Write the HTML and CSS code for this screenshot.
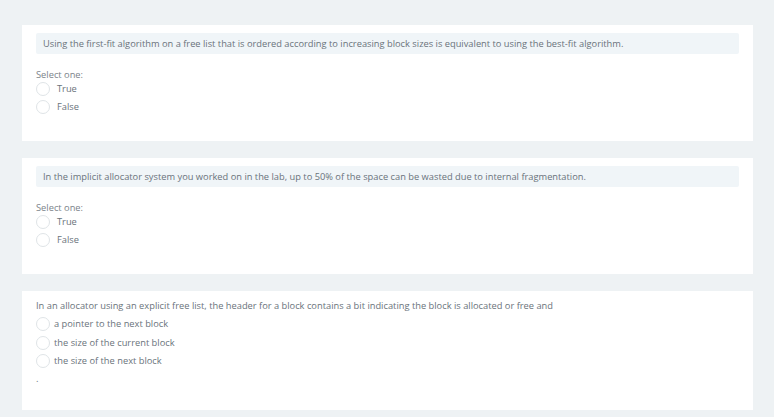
FILE: index.html
```html
<!DOCTYPE html>
<html>
<head>
<meta charset="utf-8">
<link rel="stylesheet" href="styles.css">
</head>
<body>
<div class="page">
  <section class="card">
    <div class="qtext">Using the first-fit algorithm on a free list that is ordered according to increasing block sizes is equivalent to using the best-fit algorithm.</div>
    <div class="prompt">Select one:</div>
    <div class="answers">
      <label class="opt"><span class="radio"></span><span class="lbl">True</span></label>
      <label class="opt"><span class="radio"></span><span class="lbl">False</span></label>
    </div>
  </section>
  <section class="card">
    <div class="qtext">In the implicit allocator system you worked on in the lab, up to 50% of the space can be wasted due to internal fragmentation.</div>
    <div class="prompt">Select one:</div>
    <div class="answers">
      <label class="opt"><span class="radio"></span><span class="lbl">True</span></label>
      <label class="opt"><span class="radio"></span><span class="lbl">False</span></label>
    </div>
  </section>
  <section class="card card-plain">
    <div class="qplain">In an allocator using an explicit free list, the header for a block contains a bit indicating the block is allocated or free and</div>
    <div class="answers">
      <label class="opt opt-tight"><span class="radio"></span><span class="lbl">a pointer to the next block</span></label>
      <label class="opt opt-tight"><span class="radio"></span><span class="lbl">the size of the current block</span></label>
      <label class="opt opt-tight"><span class="radio"></span><span class="lbl">the size of the next block</span></label>
    </div>
    <div class="dot">.</div>
  </section>
</div>
</body>
</html>
```

FILE: styles.css
```css
html, body {
  margin: 0;
  padding: 0;
  background: #eef2f4;
}
body {
  font-family: "Open Sans", "Liberation Sans", sans-serif;
  font-size: 9.3px;
  color: #6a737b;
}
.page {
  display: flex;
  flex-direction: column;
  gap: 17px;
  padding: 25px 21px 0 22px;
}
.card {
  background: #ffffff;
  padding: 8px 14px 25px 14px;
}
.qtext {
  background: #f0f5f8;
  border-radius: 2px;
  height: 21px;
  line-height: 21px;
  padding: 0 7px;
  color: #6a737b;
  white-space: nowrap;
}
.prompt {
  margin-top: 15px;
  height: 11px;
  line-height: 11px;
  color: #7b838a;
}
.answers {
  display: flex;
  flex-direction: column;
}
.opt {
  display: flex;
  align-items: center;
  height: 18px;
}
.radio {
  width: 12px;
  height: 12px;
  border: 1px solid #dfe4e7;
  border-radius: 50%;
  background: #fff;
  flex: none;
}
.lbl {
  margin-left: 7px;
  line-height: 12px;
}
.card-plain {
  padding-top: 8px;
  padding-bottom: 25px;
}
.qplain {
  height: 14px;
  line-height: 14px;
  margin-bottom: 2px;
}
.opt-tight {
  height: 18.5px;
}
.opt-tight .lbl {
  margin-left: 4px;
}
.dot {
  margin-top: 2px;
  height: 12px;
  line-height: 12px;
}
```
